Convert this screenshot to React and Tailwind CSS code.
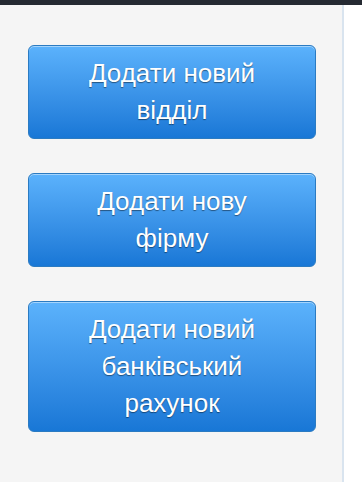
import React from "react";

const Btn = ({ children }) => (
  <button
    className="w-full rounded-[6px] border border-[#2b7bc2] bg-gradient-to-b from-[#5bb2fc] to-[#1877d6] px-4 py-[9px] text-center text-[26px] leading-[37px] text-white shadow-[inset_0_1px_0_rgba(255,255,255,0.45)] [text-shadow:0_1px_1px_rgba(0,0,0,0.45)]"
    style={{ fontFamily: '"Liberation Sans", Arial, sans-serif' }}
  >
    {children}
  </button>
);

export default function App() {
  return (
    <div className="flex h-[482px] w-[362px] flex-col bg-white">
      <div className="h-[5px] w-full bg-[#252a32]" />
      <div className="flex flex-1">
        <div className="flex w-[344px] flex-col gap-[34px] border-r-2 border-[#d9e4ef] bg-[#f5f5f5] pl-[28px] pr-[26px] pt-[40px]">
          <Btn>
            Додати новий
            <br />
            відділ
          </Btn>
          <Btn>
            Додати нову
            <br />
            фірму
          </Btn>
          <Btn>
            Додати новий
            <br />
            банківський
            <br />
            рахунок
          </Btn>
        </div>
        <div className="flex-1 bg-white" />
      </div>
    </div>
  );
}
